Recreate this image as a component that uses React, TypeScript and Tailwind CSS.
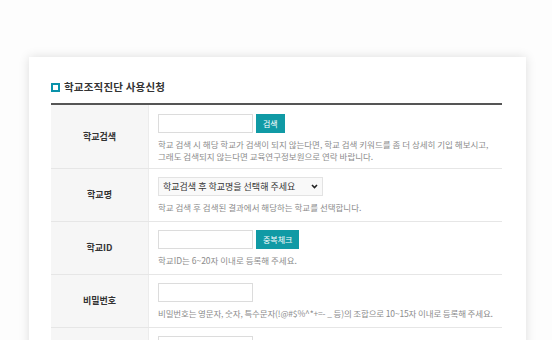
const font = { fontFamily: '"Noto Sans CJK KR", "Noto Sans", sans-serif' };

const Row = ({ label, first, children }: { label: string; first?: boolean; children: React.ReactNode }) => (
    <div className="flex border-b border-[#e6e6e6]">
        <div className="w-[98px] shrink-0 bg-[#f6f6f6] flex items-center justify-center text-[9px] font-bold text-[#333] border-r border-[#ececec]">
            {label}
        </div>
        <div className={first ? "flex-1 pl-[9px] pt-[9px] pb-[6px]" : "flex-1 pl-[9px] pt-2 pb-2"}>{children}</div>
    </div>
);

const Help = ({ children, tight }: { children: React.ReactNode; tight?: boolean }) => (
    <p className={tight ? "mt-[5px] text-[8.5px] leading-[12px] text-[#8c8c8c] whitespace-nowrap tracking-[-0.15px]" : "mt-[5px] text-[8.5px] leading-[12px] text-[#8c8c8c] whitespace-nowrap"}>
        {children}
    </p>
);

const Input = () => (
    <input className="block h-[19px] w-[95px] border border-[#dcdcdc] bg-white outline-none" />
);

const Btn = ({ children }: { children: React.ReactNode }) => (
    <button className="h-[19px] px-[7px] bg-[#109aa5] text-white text-[8px] leading-[19px]">
        {children}
    </button>
);

export default function App() {
    return (
        <div style={font} className="w-[552px] h-[340px] overflow-hidden bg-[#fdfdfd] pt-[57px] pl-[29px]">
            <div className="w-[497px] bg-white shadow-[0_0_10px_rgba(0,0,0,0.13)] pl-[22px] pr-[24px] pt-[21px] pb-10">
                <div className="flex items-center gap-[4px] h-[18px]">
                    <span className="w-[9px] h-[9px] border-2 border-[#0a92aa]" />
                    <h1 className="text-[10.5px] font-bold text-[#333] tracking-[0.2px]">학교조직진단 사용신청</h1>
                </div>
                <div className="mt-[7px] border-t-2 border-[#555]">
                    <Row label="학교검색" first>
                        <div className="flex gap-[3px]">
                            <Input />
                            <Btn>검색</Btn>
                        </div>
                        <Help>
                            학교 검색 시 해당 학교가 검색이 되지 않는다면, 학교 검색 키워드를 좀 더 상세히 기입 해보시고,
                            <br />
                            그래도 검색되지 않는다면 교육연구정보원으로 연락 바랍니다.
                        </Help>
                    </Row>
                    <Row label="학교명">
                        <div className="relative w-[165px] h-[19px]">
                            <select className="block appearance-none w-full h-[19px] py-0 border border-[#e3e3e3] bg-[#f9f9f9] pl-[4px] text-[9px] leading-[17px] text-[#333] outline-none">
                                <option>학교검색 후 학교명을 선택해 주세요</option>
                            </select>
                            <svg className="absolute right-[5px] top-[7px] pointer-events-none" width="7" height="5" viewBox="0 0 7 5">
                                <path d="M1 1l2.5 2.5L6 1" stroke="#222" strokeWidth="1.6" fill="none" />
                            </svg>
                        </div>
                        <Help>학교 검색 후 검색된 결과에서 해당하는 학교를 선택합니다.</Help>
                    </Row>
                    <Row label="학교ID">
                        <div className="flex gap-[3px]">
                            <Input />
                            <Btn>중복체크</Btn>
                        </div>
                        <Help>학교ID는 6~20자 이내로 등록해 주세요.</Help>
                    </Row>
                    <Row label="비밀번호">
                        <Input />
                        <Help tight>비밀번호는 영문자, 숫자, 특수문자(!@#$%^*+=- _ 등)의 조합으로 10~15자 이내로 등록해 주세요.</Help>
                    </Row>
                    <Row label="">
                        <Input />
                    </Row>
                </div>
            </div>
        </div>
    );
}
